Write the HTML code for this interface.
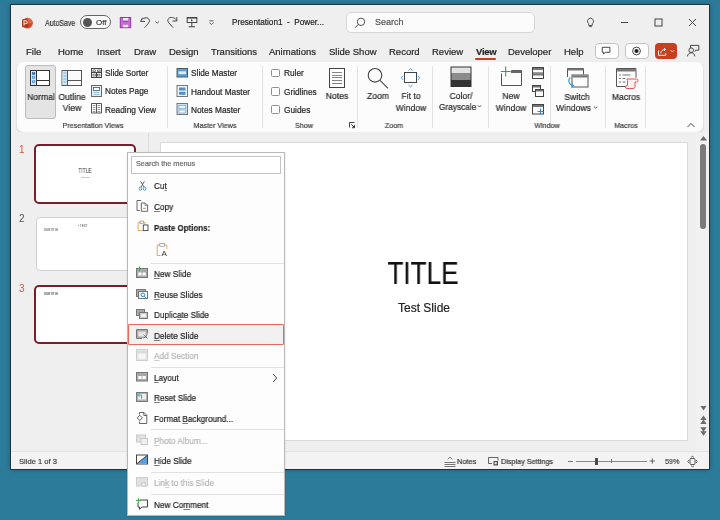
<!DOCTYPE html>
<html><head><meta charset="utf-8"><style>
html,body{margin:0;padding:0;}
body{width:720px;height:520px;position:relative;overflow:hidden;-webkit-font-smoothing:antialiased;background:#2c7b9a;font-family:"Liberation Sans",sans-serif;}
.t{position:absolute;white-space:nowrap;line-height:1;will-change:transform;-webkit-text-stroke:0.2px currentColor;}
.r{position:absolute;}
u{text-decoration:underline;text-underline-offset:1.2px;text-decoration-thickness:0.7px;text-decoration-color:rgba(40,40,40,0.6);}
</style></head><body>
<div class="r" style="left:10.5px;top:5px;width:698.8px;height:463.8px;background:#efefef;box-shadow:0 0 0 0.8px rgba(30,30,30,0.85),0 0 4px 1px rgba(0,0,0,0.25);"></div>
<svg class="r" style="left:21px;top:16.5px" width="13" height="13" viewBox="0 0 13 13"><circle cx="6.4" cy="6.2" r="5.4" fill="#cf4a2a"/><path d="M6.4 0.8a5.4 5.4 0 0 1 5.4 5.4h-5.4z" fill="#df6a48"/><rect x="1" y="2.2" width="6.3" height="8" rx="1.2" fill="#ad3219"/><path d="M3 8.6v-4.8h1.8a1.4 1.4 0 0 1 0 2.9h-1.8" stroke="#fbe6dc" stroke-width="1.1" fill="none"/></svg>
<div class="t" style="left:45.00px;top:18.80px;font-size:8.3px;color:#333;transform:scaleX(0.84);transform-origin:0 0;">AutoSave</div>
<div class="r" style="left:80px;top:15px;width:30.799999999999997px;height:14.399999999999999px;border:1px solid #666;border-radius:8px;box-sizing:border-box;background:#fbfbfb;"></div>
<div class="r" style="left:82.7px;top:17.5px;width:9.5px;height:9.5px;background:#555;border-radius:50%;"></div>
<div class="t" style="left:96.30px;top:18.84px;font-size:8px;color:#444;">Off</div>
<svg class="r" style="left:0;top:0" width="240" height="40" viewBox="0 0 240 40" fill="none">
<rect x="120.3" y="17.5" width="10.4" height="10.2" fill="#c56ad6" stroke="#8f3aa3" stroke-width="1"/>
<rect x="123" y="18" width="5.2" height="2.8" fill="#f6e6fa"/><rect x="123" y="24.8" width="5.2" height="2.4" fill="#f6e6fa"/>
<path d="M122.8 21.2h5.6" stroke="#8f3aa3" stroke-width="0.9"/>
<path d="M140.6 21.4h4.4M140.6 21.4l1.9-3.6" stroke="#404040" stroke-width="1"/>
<path d="M141.6 19.6c2.6-2.4 7-2.6 7.7 0.6c0.4 2-1.2 3.6-4.8 7.5" stroke="#404040" stroke-width="1"/>
<path d="M155.4 21.4l1.8 1.8l1.8-1.8" stroke="#505050" stroke-width="0.9"/>
<path d="M176.8 21h-4.2M176.8 21v-3.8" stroke="#404040" stroke-width="1"/>
<path d="M175.8 19.2c-2.6-2.4-7-2.4-7.9 0.6c-0.5 2 1.5 3.8 5.2 7.8" stroke="#404040" stroke-width="1"/>
<rect x="187.2" y="17.6" width="9.6" height="4.9" stroke="#404040" stroke-width="1" fill="#f4f4f4"/>
<path d="M187 17.8h10" stroke="#404040" stroke-width="1.4"/>
<path d="M191.8 22.5v4.2M188.6 26.8h6.4" stroke="#404040" stroke-width="1"/>
<path d="M191 19v2.6l2-1.3z" fill="#404040"/>
<path d="M209.3 20.8h4.4" stroke="#505050" stroke-width="0.9"/><path d="M209.4 22.6l2.1 1.9l2.1-1.9" stroke="#505050" stroke-width="0.9"/>
</svg>
<div class="t" style="left:231.50px;top:18.55px;font-size:8.2px;color:#262626;">Presentation1&nbsp; -&nbsp; Power...</div>
<div class="r" style="left:346px;top:12px;width:189px;height:21px;background:#fbfbfb;border:1px solid #d6d6d6;border-radius:5px;box-sizing:border-box;"></div>
<svg class="r" style="left:354px;top:17px" width="12" height="12" viewBox="0 0 12 12"><circle cx="7" cy="4.8" r="3.7" stroke="#444" stroke-width="0.9" fill="none"/><path d="M4.4 7.4 L1 10.8" stroke="#444" stroke-width="1"/></svg>
<div class="t" style="left:375.00px;top:18.16px;font-size:9px;color:#555;">Search</div>
<svg class="r" style="left:586px;top:17px" width="9" height="11" viewBox="0 0 9 11"><path d="M4.5 1.2a3 3 0 0 0 -1.8 5.4v1.9h3.6v-1.9a3 3 0 0 0 -1.8 -5.4z" stroke="#444" fill="none" stroke-width="0.9"/><path d="M3.2 9.6h2.6" stroke="#444" stroke-width="0.9"/></svg>
<div class="r" style="left:620.5px;top:22px;width:7.5px;height:1px;background:#444;"></div>
<svg class="r" style="left:654px;top:18px" width="9" height="9" viewBox="0 0 9 9"><rect x="1" y="1" width="7" height="7" stroke="#444" fill="none" stroke-width="1"/></svg>
<svg class="r" style="left:688px;top:18px" width="9" height="9" viewBox="0 0 9 9"><path d="M1 1L8 8M8 1L1 8" stroke="#444" stroke-width="1"/></svg>
<div class="t" style="left:26.00px;top:46.72px;font-size:9.5px;color:#262626;">File</div>
<div class="t" style="left:58.30px;top:46.72px;font-size:9.5px;color:#262626;">Home</div>
<div class="t" style="left:97.30px;top:46.72px;font-size:9.5px;color:#262626;">Insert</div>
<div class="t" style="left:134.00px;top:46.72px;font-size:9.5px;color:#262626;">Draw</div>
<div class="t" style="left:169.30px;top:46.72px;font-size:9.5px;color:#262626;">Design</div>
<div class="t" style="left:210.80px;top:46.72px;font-size:9.5px;color:#262626;">Transitions</div>
<div class="t" style="left:268.60px;top:46.72px;font-size:9.5px;color:#262626;">Animations</div>
<div class="t" style="left:329.00px;top:46.72px;font-size:9.5px;color:#262626;">Slide Show</div>
<div class="t" style="left:389.00px;top:46.72px;font-size:9.5px;color:#262626;">Record</div>
<div class="t" style="left:432.00px;top:46.72px;font-size:9.5px;color:#262626;">Review</div>
<div class="t" style="left:475.50px;top:46.72px;font-size:9.5px;color:#262626;font-weight:bold;letter-spacing:-0.25px;">View</div>
<div class="t" style="left:508.00px;top:46.72px;font-size:9.5px;color:#262626;">Developer</div>
<div class="t" style="left:564.00px;top:46.72px;font-size:9.5px;color:#262626;">Help</div>
<div class="r" style="left:475px;top:57.5px;width:21px;height:2.0px;background:#c43e1c;border-radius:1px;"></div>
<div class="r" style="left:594.5px;top:43px;width:24.0px;height:16px;background:#fdfdfd;border:1px solid #c4c4c4;border-radius:4px;box-sizing:border-box;"></div>
<div class="r" style="left:624.5px;top:43px;width:24.5px;height:16px;background:#fdfdfd;border:1px solid #c4c4c4;border-radius:4px;box-sizing:border-box;"></div>
<div class="r" style="left:655px;top:43px;width:22.299999999999955px;height:16px;background:#c4401f;border-radius:4px;"></div>
<svg class="r" style="left:0;top:0" width="720" height="70" viewBox="0 0 720 70" fill="none">
<path d="M602.3 47.3h7.6v5h-4.3l-2 1.6v-1.6h-1.3z" stroke="#333" stroke-width="0.9"/>
<circle cx="636.5" cy="51" r="3.9" stroke="#333" stroke-width="0.9"/><circle cx="636.5" cy="51" r="2.1" fill="#222"/>
<path d="M658.5 50.5v4.8h7.2v-2.3" stroke="#fff" stroke-width="0.9"/>
<path d="M660.8 53.3c0.2-2.6 2-3.8 4.6-3.8M664 48l1.6 1.5l-1.6 1.5" stroke="#fff" stroke-width="0.9"/>
<path d="M670.8 50.3l1.6 1.6l1.6-1.6" stroke="#fff" stroke-width="0.9"/>
<path d="M690.5 48v-2.6h8.3v4.8h-3.2l-0.8 1.5" stroke="#333" stroke-width="0.9"/>
<circle cx="691.2" cy="50.2" r="2.3" stroke="#333" stroke-width="0.9" fill="#f0f0f0"/>
<path d="M687.4 56.4c0.4-2.4 2-3.6 3.8-3.6s3.4 1.2 3.6 3.6" stroke="#333" stroke-width="0.9"/>
</svg>
<div class="r" style="left:16.5px;top:62px;width:686.5px;height:69.5px;background:#fcfcfc;border-radius:6px;box-shadow:0 1px 2px rgba(0,0,0,0.18);"></div>
<div class="r" style="left:167px;top:66px;width:1px;height:61.5px;background:#e3e3e3;"></div>
<div class="r" style="left:262px;top:66px;width:1px;height:61.5px;background:#e3e3e3;"></div>
<div class="r" style="left:357px;top:66px;width:1px;height:61.5px;background:#e3e3e3;"></div>
<div class="r" style="left:432px;top:66px;width:1px;height:61.5px;background:#e3e3e3;"></div>
<div class="r" style="left:488px;top:66px;width:1px;height:61.5px;background:#e3e3e3;"></div>
<div class="r" style="left:550.3px;top:66px;width:1.0px;height:61.5px;background:#e3e3e3;"></div>
<div class="r" style="left:605.3px;top:66px;width:1.0px;height:61.5px;background:#e3e3e3;"></div>
<div class="r" style="left:645.3px;top:66px;width:1.0px;height:61.5px;background:#e3e3e3;"></div>
<!--RIBBON-->
<div class="r" style="left:25px;top:64.5px;width:31px;height:54.0px;background:#e4e4e4;border:1px solid #bcbcbc;border-radius:3px;box-sizing:border-box;"></div>
<div class="t" style="left:-59.50px;width:200px;text-align:center;top:92.86px;font-size:9px;color:#262626;transform:scaleX(0.955);">Normal</div>
<div class="t" style="left:-28.50px;width:200px;text-align:center;top:92.86px;font-size:9px;color:#262626;transform:scaleX(0.955);">Outline</div>
<div class="t" style="left:-28.50px;width:200px;text-align:center;top:104.36px;font-size:9px;color:#262626;transform:scaleX(0.955);">View</div>
<div class="t" style="left:105.00px;top:69.20px;font-size:8.3px;color:#262626;">Slide Sorter</div>
<div class="t" style="left:105.00px;top:87.30px;font-size:8.3px;color:#262626;">Notes Page</div>
<div class="t" style="left:105.00px;top:105.50px;font-size:8.3px;color:#262626;">Reading View</div>
<div class="t" style="left:-6.70px;width:200px;text-align:center;top:121.64px;font-size:7.6px;color:#3a3a3a;transform:scaleX(0.94);">Presentation Views</div>
<div class="t" style="left:191.20px;top:69.20px;font-size:8.3px;color:#262626;">Slide Master</div>
<div class="t" style="left:191.20px;top:87.50px;font-size:8.3px;color:#262626;">Handout Master</div>
<div class="t" style="left:191.20px;top:105.60px;font-size:8.3px;color:#262626;">Notes Master</div>
<div class="t" style="left:115.00px;width:200px;text-align:center;top:121.64px;font-size:7.6px;color:#3a3a3a;transform:scaleX(0.94);">Master Views</div>
<div class="r" style="left:271px;top:69.0px;width:8.600000000000023px;height:8.299999999999997px;background:#fff;border:1px solid #8f8f8f;border-radius:1.5px;box-sizing:border-box;"></div>
<div class="t" style="left:283.60px;top:69.20px;font-size:8.3px;color:#262626;">Ruler</div>
<div class="r" style="left:271px;top:87.3px;width:8.600000000000023px;height:8.299999999999997px;background:#fff;border:1px solid #8f8f8f;border-radius:1.5px;box-sizing:border-box;"></div>
<div class="t" style="left:283.60px;top:87.50px;font-size:8.3px;color:#262626;">Gridlines</div>
<div class="r" style="left:271px;top:105.39999999999999px;width:8.600000000000023px;height:8.299999999999997px;background:#fff;border:1px solid #8f8f8f;border-radius:1.5px;box-sizing:border-box;"></div>
<div class="t" style="left:283.60px;top:105.60px;font-size:8.3px;color:#262626;">Guides</div>
<div class="t" style="left:204.00px;width:200px;text-align:center;top:121.64px;font-size:7.6px;color:#3a3a3a;transform:scaleX(0.94);">Show</div>
<div class="t" style="left:236.80px;width:200px;text-align:center;top:92.36px;font-size:9px;color:#262626;transform:scaleX(0.955);">Notes</div>
<div class="t" style="left:277.70px;width:200px;text-align:center;top:92.36px;font-size:9px;color:#262626;transform:scaleX(0.955);">Zoom</div>
<div class="t" style="left:310.50px;width:200px;text-align:center;top:92.36px;font-size:9px;color:#262626;transform:scaleX(0.955);">Fit to</div>
<div class="t" style="left:310.50px;width:200px;text-align:center;top:103.96px;font-size:9px;color:#262626;transform:scaleX(0.955);">Window</div>
<div class="t" style="left:294.30px;width:200px;text-align:center;top:121.64px;font-size:7.6px;color:#3a3a3a;transform:scaleX(0.94);">Zoom</div>
<div class="t" style="left:360.50px;width:200px;text-align:center;top:91.66px;font-size:9px;color:#262626;transform:scaleX(0.955);">Color/</div>
<div class="t" style="left:439.00px;top:103.06px;font-size:9px;color:#262626;transform:scaleX(0.92);transform-origin:0 0;">Grayscale</div>
<div class="t" style="left:410.50px;width:200px;text-align:center;top:92.36px;font-size:9px;color:#262626;transform:scaleX(0.955);">New</div>
<div class="t" style="left:410.50px;width:200px;text-align:center;top:103.96px;font-size:9px;color:#262626;transform:scaleX(0.955);">Window</div>
<div class="t" style="left:477.00px;width:200px;text-align:center;top:93.16px;font-size:9px;color:#262626;transform:scaleX(0.955);">Switch</div>
<div class="t" style="left:556.40px;top:103.96px;font-size:9px;color:#262626;transform:scaleX(0.955);transform-origin:0 0;">Windows</div>
<div class="t" style="left:447.00px;width:200px;text-align:center;top:121.64px;font-size:7.6px;color:#3a3a3a;transform:scaleX(0.94);">Window</div>
<div class="t" style="left:526.00px;width:200px;text-align:center;top:93.16px;font-size:9px;color:#262626;transform:scaleX(0.955);">Macros</div>
<div class="t" style="left:526.00px;width:200px;text-align:center;top:121.64px;font-size:7.6px;color:#3a3a3a;transform:scaleX(0.94);">Macros</div>
<svg class="r" style="left:0;top:0" width="720" height="140" viewBox="0 0 720 140" fill="none" stroke-width="1">
<!-- Normal icon -->
<rect x="30.5" y="70.5" width="19" height="15" stroke="#333" fill="#fff"/>
<rect x="31" y="71" width="5.5" height="14" fill="#cfe7f6"/>
<path d="M36.5 70.5v15M36.5 80.5h13" stroke="#333"/>
<rect x="32.3" y="72.6" width="2.6" height="2" fill="#3a78b8" stroke="#2a5f98" stroke-width="0.5"/><rect x="32.3" y="76.6" width="2.6" height="2" fill="#9ccbeb" stroke="#3a78b8" stroke-width="0.5"/><rect x="32.3" y="80.8" width="2.6" height="2" fill="#9ccbeb" stroke="#3a78b8" stroke-width="0.5"/>
<!-- Outline icon -->
<rect x="62" y="70.5" width="19.5" height="15" stroke="#555" fill="#fafafa"/>
<rect x="62.5" y="71" width="5" height="14" fill="#cde7f6"/>
<path d="M67.5 70.5v15M67.5 80.5h14" stroke="#555"/>
<path d="M63.5 73h3M63.5 76h3M63.5 79h3M63.5 82h3" stroke="#7fb4dc"/>
<!-- Slide sorter -->
<rect x="91.5" y="68.5" width="10" height="9" stroke="#444"/>
<path d="M91.5 72.5h10M96.5 72.5v5" stroke="#444"/>
<rect x="93" y="70" width="2.6" height="1.6" stroke="#555" stroke-width="0.7"/><rect x="97.6" y="70" width="2.6" height="1.6" stroke="#555" stroke-width="0.7"/>
<rect x="93" y="74.2" width="2.4" height="1.8" stroke="#555" stroke-width="0.7"/><rect x="97.6" y="74.2" width="2.4" height="1.8" stroke="#555" stroke-width="0.7"/>
<!-- Notes page -->
<rect x="91.5" y="85.5" width="10" height="11" stroke="#6a6a6a" fill="#dff0f8"/>
<rect x="93.5" y="87.5" width="6" height="3" stroke="#555" fill="#fff" stroke-width="0.8"/>
<path d="M93.5 92.5h6M93.5 94.5h6" stroke="#8ab8d8" stroke-width="0.8"/>
<!-- Reading view -->
<path d="M91.5 103.5h5v9.5h-5z M96.5 103.5h5v9.5h-5z" stroke="#555"/>
<path d="M92.8 105.5h2.6M92.8 107.5h2.6M92.8 109.5h2.6M92.8 111.5h2.6M97.6 105.5h2.6M97.6 107.5h2.6M97.6 109.5h2.6M97.6 111.5h2.6" stroke="#777" stroke-width="0.8"/>
<!-- Slide master -->
<rect x="177" y="68.5" width="10.5" height="8.5" stroke="#4a5a6a" fill="#5d9fd4"/>
<rect x="178.5" y="71.3" width="7.5" height="2.8" fill="#dcecf8"/>
<!-- Handout master -->
<rect x="177" y="85.5" width="10.5" height="11" stroke="#777" fill="#eef5fb"/>
<rect x="179" y="87.5" width="6.5" height="3" fill="#4e8fc8"/><rect x="179" y="91.8" width="6.5" height="3" fill="#4e8fc8"/>
<!-- Notes master -->
<rect x="177" y="103.5" width="10.5" height="11" stroke="#777" fill="#c6e1f3"/>
<rect x="179" y="105.5" width="6.5" height="3.2" fill="#eef7fd" stroke="#6a9cc8" stroke-width="0.6"/>
<rect x="179" y="110" width="6.5" height="3" fill="#eef7fd" stroke="#6a9cc8" stroke-width="0.6"/>
<!-- Notes -->
<rect x="329.5" y="68.5" width="15" height="19" stroke="#444" fill="#fff"/>
<path d="M332 72.5h10M332 75.5h10M332 77.5h10M332 80.5h10M332 83.5h10" stroke="#777" stroke-width="0.9"/>
<!-- Zoom -->
<circle cx="375" cy="75.3" r="6.8" stroke="#444" stroke-width="1.1"/>
<path d="M380 80.3L388 88.3" stroke="#444" stroke-width="1.1"/>
<!-- Fit to window -->
<rect x="404.5" y="72.5" width="12" height="10" stroke="#444"/>
<path d="M408.5 70.5l2-1.8l2 1.8M408.5 85l2 1.8l2-1.8M403 75.8l-1.6 2l1.6 2M418 75.8l1.6 2l-1.6 2" stroke="#4a9bd6"/>
<!-- Color/Grayscale -->
<rect x="451" y="67" width="20" height="19.5" stroke="#333" fill="#333"/>
<rect x="451.5" y="67.5" width="19" height="6" fill="#e2e2e2"/>
<rect x="451.5" y="73.5" width="19" height="6.5" fill="#8c8c8c"/>
<!-- New window -->
<path d="M501.5 73.5v12h20v-15h-10" stroke="#555"/>
<rect x="511" y="70.5" width="10.5" height="2.5" fill="#666"/>
<path d="M505.7 66.5v10M500.7 71.5h10" stroke="#3aa04a" stroke-width="1.1"/>
<!-- arrange all -->
<rect x="532.5" y="67.5" width="11" height="11" stroke="#444"/>
<path d="M532.5 73h11" stroke="#444"/>
<rect x="533" y="68" width="10" height="2" fill="#777"/><rect x="533" y="73.5" width="10" height="2" fill="#777"/>
<!-- cascade -->
<rect x="532.5" y="85.5" width="8" height="6" stroke="#444"/>
<rect x="535.5" y="89.5" width="8" height="7" stroke="#444" fill="#fcfcfc"/>
<rect x="533" y="86" width="7" height="1.5" fill="#777"/><rect x="536" y="90" width="7" height="1.5" fill="#777"/>
<!-- new split -->
<rect x="532.5" y="104.5" width="11" height="9.5" stroke="#444"/>
<rect x="533" y="105" width="10" height="2" fill="#777"/>
<path d="M540.5 108.5v6M537.5 111.5h6" stroke="#2f88d0" stroke-width="1.1"/>
<!-- switch windows -->
<path d="M567.5 77v-8.5h16v6" stroke="#555"/>
<rect x="567.5" y="68.5" width="16" height="2" fill="#777"/>
<rect x="572" y="75" width="16" height="12" stroke="#555" fill="#fcfcfc"/>
<rect x="572.5" y="75.5" width="15" height="2" fill="#777"/>
<path d="M570.5 77.5c-3 2-2 7 2.5 8" stroke="#3a9ad6" stroke-width="1.1"/>
<path d="M571.5 84l2 1.6l-2 1.8" stroke="#3a9ad6" stroke-width="1.1"/>
<!-- macros -->
<path d="M626 86.5h-9.5v-18h19.5v9" stroke="#555"/>
<rect x="617" y="69" width="18.5" height="2.5" fill="#777"/>
<path d="M619 75h2M622.5 75h8M619 78.5h2M622.5 78.5h3M619 82h2M622.5 82h3" stroke="#777"/>
<path d="M627 79h9.5a1.5 1.5 0 0 1 0 3h-1.5v5a1.5 1.5 0 0 1 -1.5 1.5h-6.5a1.5 1.5 0 0 1 0 -3h0.5v-5a1.5 1.5 0 0 1 -0.5 -1.5z" stroke="#e05555" fill="#fcf0f0"/>
<!-- dialog launcher -->
<path d="M349.5 127.5v-5h5" stroke="#444" stroke-width="1"/><path d="M351.3 124.3l3 3M354.5 125.2v2.5h-2.5" stroke="#333" stroke-width="1"/>
<!-- collapse -->
<path d="M687.5 127l3.5-3.5l3.5 3.5" stroke="#444" stroke-width="1"/>
<path d="M477.8 105.3l1.7 1.7l1.7-1.7M593.9 106.5l1.7 1.7l1.7-1.7" stroke="#444" stroke-width="0.9"/>
</svg>
<!--/RIBBON-->
<div class="r" style="left:11px;top:131.5px;width:698px;height:319.5px;background:#efefef;"></div>
<div class="r" style="left:148px;top:133px;width:1px;height:318px;background:#dcdcdc;"></div>
<div class="r" style="left:696px;top:133px;width:13px;height:318px;background:#f1f1f1;"></div>
<div class="r" style="left:34px;top:144px;width:101.5px;height:59.5px;background:#fff;border:2px solid #7b1e2c;border-radius:5px;box-sizing:border-box;"></div>
<div class="t" style="left:19.20px;top:144.58px;font-size:10px;color:#d05a3c;-webkit-text-stroke:0;">1</div>
<div class="t" style="left:-15.10px;width:200px;text-align:center;top:166.73px;font-size:7.2px;color:#333;transform:scaleX(0.68);-webkit-text-stroke:0.1px #333;">TITLE</div>
<div class="r" style="left:80.5px;top:176.8px;width:9.0px;height:1.1999999999999886px;background:#c8c8c8;"></div>
<div class="r" style="left:35.7px;top:216.7px;width:100.3px;height:54.80000000000001px;background:#fff;border:1px solid #d0d0d0;border-radius:4px;box-sizing:border-box;"></div>
<div class="t" style="left:19.20px;top:214.18px;font-size:10px;color:#555;-webkit-text-stroke:0;">2</div>
<div class="t" style="left:43.50px;top:228.85px;font-size:3px;color:#666;-webkit-text-stroke:0.05px #666;">SUBTITLE</div>
<div class="t" style="left:77.50px;top:224.75px;font-size:3px;color:#666;-webkit-text-stroke:0.05px #666;">• TEXT</div>
<div class="r" style="left:34px;top:285px;width:101.5px;height:58.5px;background:#fff;border:2px solid #7b1e2c;border-radius:5px;box-sizing:border-box;"></div>
<div class="t" style="left:19.20px;top:283.88px;font-size:10px;color:#d05a3c;-webkit-text-stroke:0;">3</div>
<div class="t" style="left:43.50px;top:292.85px;font-size:3px;color:#555;-webkit-text-stroke:0.1px #555;">SUBTITLE</div>
<div class="r" style="left:160px;top:142px;width:528px;height:298.5px;background:#fff;border:1px solid #dadada;box-sizing:border-box;"></div>
<div class="t" style="left:323.30px;width:200px;text-align:center;top:257.90px;font-size:30.5px;color:#111;transform:scaleX(0.856);">TITLE</div>
<div class="t" style="left:323.80px;width:200px;text-align:center;top:301.62px;font-size:12px;color:#222;">Test Slide</div>
<svg class="r" style="left:699px;top:134px" width="9" height="8" viewBox="0 0 9 8"><path d="M1 6.5L4.5 2L8 6.5z" fill="#6a6a6a"/></svg>
<div class="r" style="left:700.2px;top:144.4px;width:6.099999999999909px;height:84.79999999999998px;background:#7a7a7a;border-radius:3px;"></div>
<svg class="r" style="left:0;top:0" width="720" height="520" viewBox="0 0 720 520">
<path d="M700.5 406h6l-3 4.4z" fill="#6a6a6a"/>
<path d="M700.3 420l3.2-4.5l3.2 4.5zM700.3 424l3.2-4.6l3.2 4.6z" fill="#6a6a6a"/>
<path d="M700.3 427.2h6.4l-3.2 4.5zM700.3 431.2h6.4l-3.2 4.5z" fill="#6a6a6a"/>
</svg>
<div class="r" style="left:11px;top:451px;width:698px;height:17px;background:#f3f3f3;border-top:1px solid #e2e2e2;box-sizing:border-box;"></div>
<div class="t" style="left:19.40px;top:457.94px;font-size:7.6px;color:#444;">Slide 1 of 3</div>
<svg class="r" style="left:0;top:0" width="720" height="520" viewBox="0 0 720 520" fill="none">
<path d="M444.5 462.5h11M444.5 464.5h11M444.5 466.5h11" stroke="#555" stroke-width="0.8"/>
<path d="M447.8 459.3l2.2-2.2l2.2 2.2" stroke="#555" stroke-width="0.8"/>
<path d="M492 463.5h-3.5v-6h9.5v3" stroke="#555" stroke-width="0.9"/>
<rect x="493.5" y="461" width="4.5" height="4.5" fill="#555"/><rect x="494.7" y="462.2" width="2" height="2" fill="#f3f3f3"/>
</svg>
<div class="t" style="left:456.80px;top:457.64px;font-size:7.8px;color:#333;transform:scaleX(0.95);transform-origin:0 0;">Notes</div>
<div class="t" style="left:500.70px;top:457.64px;font-size:7.8px;color:#333;transform:scaleX(0.93);transform-origin:0 0;">Display Settings</div>
<div class="r" style="left:567.5px;top:460.6px;width:5.0px;height:0.8999999999999773px;background:#777;"></div>
<div class="r" style="left:576px;top:460.8px;width:70.5px;height:0.8000000000000114px;background:#8a8a8a;"></div>
<div class="r" style="left:594.6px;top:457.6px;width:3.199999999999932px;height:7.0px;background:#4a4a4a;border-radius:0.5px;"></div>
<div class="r" style="left:610.8px;top:459.3px;width:0.900000000000091px;height:3.6999999999999886px;background:#777;"></div>
<svg class="r" style="left:0;top:0" width="720" height="520" viewBox="0 0 720 520" fill="none">
<path d="M652.3 458.4v5.2M649.7 461h5.2" stroke="#555" stroke-width="0.9"/>
<rect x="690" y="458.5" width="5" height="6" rx="1" stroke="#444" stroke-width="0.9"/>
<path d="M691 457.3l1.5-1l1.5 1M691 465.8l1.5 1l1.5-1M688.8 460l-1 1.5l1 1.5M696.2 460l1 1.5l-1 1.5" stroke="#444" stroke-width="0.8"/>
</svg>
<div class="t" style="left:664.60px;top:457.64px;font-size:7.8px;color:#444;transform:scaleX(0.92);transform-origin:0 0;">59%</div>
<!--MENU-->
<div class="r" style="left:127px;top:152px;width:157.8px;height:364px;background:#fdfdfd;border:1px solid #b8b8b8;box-sizing:border-box;box-shadow:0 1px 2px rgba(0,0,0,0.12);"></div>
<div class="r" style="left:131px;top:156px;width:150.3px;height:17.5px;background:#fff;border:1px solid #c4c4c4;box-sizing:border-box;"></div>
<div class="t" style="left:136.00px;top:159.88px;font-size:7.3px;color:#6a6a6a;">Search the menus</div>
<div class="r" style="left:128.3px;top:324.2px;width:155.5px;height:21.100000000000023px;background:#f1f1f1;border:1.5px solid #e8685c;border-radius:1px;box-sizing:border-box;"></div>
<div class="t" style="left:154.40px;top:224.36px;font-size:9px;color:#262626;transform:scaleX(0.885);transform-origin:0 0;font-weight:bold;">Paste Options:</div>
<div class="t" style="left:154.00px;top:181.96px;font-size:9px;color:#202020;transform:scaleX(0.915);transform-origin:0 0;">Cu<u>t</u></div>
<div class="t" style="left:154.00px;top:202.66px;font-size:9px;color:#202020;transform:scaleX(0.915);transform-origin:0 0;"><u>C</u>opy</div>
<div class="t" style="left:154.00px;top:270.26px;font-size:9px;color:#202020;transform:scaleX(0.915);transform-origin:0 0;"><u>N</u>ew Slide</div>
<div class="t" style="left:154.00px;top:290.66px;font-size:9px;color:#202020;transform:scaleX(0.915);transform-origin:0 0;"><u>R</u>euse Slides</div>
<div class="t" style="left:154.00px;top:310.66px;font-size:9px;color:#202020;transform:scaleX(0.915);transform-origin:0 0;">Duplic<u>a</u>te Slide</div>
<div class="t" style="left:154.00px;top:331.76px;font-size:9px;color:#202020;transform:scaleX(0.915);transform-origin:0 0;"><u>D</u>elete Slide</div>
<div class="t" style="left:154.00px;top:352.06px;font-size:9px;color:#b3b3b3;transform:scaleX(0.915);transform-origin:0 0;"><u style="text-decoration-color:#d0d0d0">A</u>dd Section</div>
<div class="t" style="left:154.00px;top:373.96px;font-size:9px;color:#202020;transform:scaleX(0.915);transform-origin:0 0;"><u>L</u>ayout</div>
<div class="t" style="left:154.00px;top:394.06px;font-size:9px;color:#202020;transform:scaleX(0.915);transform-origin:0 0;"><u>R</u>eset Slide</div>
<div class="t" style="left:154.00px;top:414.96px;font-size:9px;color:#202020;transform:scaleX(0.915);transform-origin:0 0;">Format <u>B</u>ackground...</div>
<div class="t" style="left:154.00px;top:436.66px;font-size:9px;color:#b3b3b3;transform:scaleX(0.915);transform-origin:0 0;"><u style="text-decoration-color:#d0d0d0">P</u>hoto Album...</div>
<div class="t" style="left:154.00px;top:456.66px;font-size:9px;color:#202020;transform:scaleX(0.915);transform-origin:0 0;"><u>H</u>ide Slide</div>
<div class="t" style="left:154.00px;top:479.06px;font-size:9px;color:#b3b3b3;transform:scaleX(0.915);transform-origin:0 0;">Lin<u style="text-decoration-color:#d0d0d0">k</u> to this Slide</div>
<div class="t" style="left:154.00px;top:500.86px;font-size:9px;color:#202020;transform:scaleX(0.915);transform-origin:0 0;">New Co<u>m</u>ment</div>
<div class="r" style="left:150.5px;top:262.7px;width:133.3px;height:1.0px;background:#e1e1e1;"></div>
<div class="r" style="left:150.5px;top:367px;width:133.3px;height:1px;background:#e1e1e1;"></div>
<div class="r" style="left:150.5px;top:428.6px;width:133.3px;height:1.0px;background:#e1e1e1;"></div>
<div class="r" style="left:150.5px;top:472px;width:133.3px;height:1px;background:#e1e1e1;"></div>
<div class="r" style="left:150.5px;top:494px;width:133.3px;height:1px;background:#e1e1e1;"></div>
<svg class="r" style="left:272px;top:373px" width="6" height="10" viewBox="0 0 6 10"><path d="M1.2 1l3.5 4l-3.5 4" stroke="#444" fill="none" stroke-width="1"/></svg>
<svg class="r" style="left:0;top:0" width="720" height="520" viewBox="0 0 720 520" fill="none" stroke-width="1">
<!-- cut -->
<path d="M140.6 181.3L144 187.2M144.4 181.3L141 187.2" stroke="#555" stroke-width="0.9"/>
<ellipse cx="140.4" cy="188.7" rx="1.3" ry="1.6" stroke="#3d8fb5" stroke-width="0.9"/><ellipse cx="144.6" cy="188.7" rx="1.3" ry="1.6" stroke="#3d8fb5" stroke-width="0.9"/>
<!-- copy -->
<path d="M139.8 210.5h-2.8v-10h4.2" stroke="#555" stroke-width="0.9"/>
<path d="M141.3 203h4l2.3 2.3v6h-6.3z" stroke="#555" fill="#fff" stroke-width="0.9"/>
<path d="M145 203v2.5h2.5M143 208.3h3" stroke="#777" stroke-width="0.8"/>
<!-- paste -->
<path d="M142.5 230.5h-4.3v-8h1.8M143.5 222.5h1.5v2.3" stroke="#e0a050" stroke-width="0.9"/>
<rect x="140" y="221" width="3.5" height="2.3" stroke="#888" fill="#fff" stroke-width="0.7"/>
<rect x="143.3" y="225" width="4.7" height="5.6" stroke="#444" fill="#fff" stroke-width="0.9"/>
<!-- paste keep text -->
<path d="M160.5 255.5h-3.3v-10.5h2.5M164.5 245h2.3v4" stroke="#e0a050" stroke-width="0.9"/>
<rect x="159.8" y="243.6" width="4.6" height="2.6" stroke="#888" fill="#fff" stroke-width="0.7"/>
<text x="161.6" y="256.3" font-family="Liberation Sans" font-size="8" fill="#333">A</text>
<!-- new slide -->
<rect x="136.5" y="268.5" width="11" height="9" stroke="#777" fill="#a9a9a9"/>
<rect x="138.3" y="272.5" width="3.2" height="3" fill="#fff"/><rect x="142.5" y="272.5" width="3.2" height="3" fill="#fff"/>
<path d="M139.5 266.5v4M137.5 268.5h4" stroke="#3aa04a"/>
<!-- reuse -->
<rect x="136.5" y="289.5" width="9" height="7" stroke="#777" fill="#a9a9a9"/>
<rect x="138.5" y="291.5" width="9" height="7" stroke="#777" fill="#eef6fb"/>
<circle cx="142.8" cy="294.8" r="1.8" stroke="#3a8ad0"/><path d="M144.2 296.2l1.8 1.8" stroke="#3a8ad0"/>
<!-- duplicate -->
<rect x="136.5" y="309.5" width="8" height="6" stroke="#777" fill="#a9a9a9"/>
<rect x="139.5" y="312.5" width="8" height="6" stroke="#777" fill="#c9c9c9"/>
<rect x="141" y="314" width="5" height="3" fill="#f0f0f0"/>
<!-- delete -->
<path d="M142 338.5h-5.5v-9h11v4" stroke="#777"/>
<rect x="137" y="330" width="10" height="8" fill="#a9a9a9"/><rect x="138.3" y="331.5" width="7.5" height="5" fill="#e4e4e4"/>
<path d="M143.5 334.5l4 4M147.5 334.5l-4 4" stroke="#e04a3a" stroke-width="0.9"/>
<!-- add section -->
<rect x="136.5" y="349.5" width="11" height="11" stroke="#cfcfcf" fill="#e6e6e6"/>
<path d="M136.5 352h11" stroke="#cfcfcf"/><rect x="138.5" y="354" width="7" height="4.5" fill="#f7f7f7"/>
<!-- layout -->
<rect x="136.5" y="372.5" width="11" height="8.5" stroke="#777" fill="#a9a9a9"/>
<rect x="138.3" y="376" width="3.3" height="3" fill="#fff"/><rect x="142.5" y="376" width="3.3" height="3" fill="#fff"/>
<!-- reset -->
<rect x="136.5" y="392.5" width="11" height="9" stroke="#7a7a7a" fill="#b0b0b0"/>
<rect x="138" y="394" width="8" height="5.5" fill="#eeeeee"/>
<path d="M141.5 398.5v-3.5h-3.5" stroke="#3aa0b8" stroke-width="1"/><path d="M139.4 393.2l-1.8 1.8l1.8 1.8" stroke="#3aa0b8" stroke-width="1"/>
<!-- format background -->
<path d="M139.5 414.5v-2h4.5l2.8 2.8v8.2h-7.3v-2" stroke="#555" stroke-width="0.9"/>
<path d="M143.8 412.5v3h3" stroke="#555" stroke-width="0.9"/>
<path d="M139.8 415.3l2.6 2.6l-2.6 2.6l-2.6-2.6z" stroke="#444" stroke-width="0.9" fill="#fff"/>
<!-- photo album -->
<rect x="136.5" y="435" width="9" height="7" stroke="#c9c9c9" fill="#e4e4e4"/>
<path d="M137.5 436l7 5.5" stroke="#c9c9c9"/>
<rect x="141" y="438.5" width="6.5" height="6" stroke="#c9c9c9" fill="#f0f0f0"/>
<!-- hide slide -->
<rect x="136.5" y="455" width="11" height="9" stroke="#444" fill="#fff"/>
<path d="M137 463.5L147 455.5V463.5z" fill="#5a9fd8"/>
<path d="M137 463.5L147 455.5" stroke="#444"/>
<!-- link -->
<rect x="136.5" y="477.5" width="11" height="8.5" stroke="#cfcfcf" fill="#e0e0e0"/>
<circle cx="143.5" cy="484.5" r="2" stroke="#c4c4c4" fill="#f2f2f2"/>
<!-- new comment -->
<path d="M140 500h7.5v7h-5.5l-2.5 2.3v-2.3h-1.5v-4" stroke="#444"/>
<path d="M138.5 498v5M136 500.5h5" stroke="#3aa04a" stroke-width="0.9"/>
</svg>
<!--/MENU-->
</body></html>
